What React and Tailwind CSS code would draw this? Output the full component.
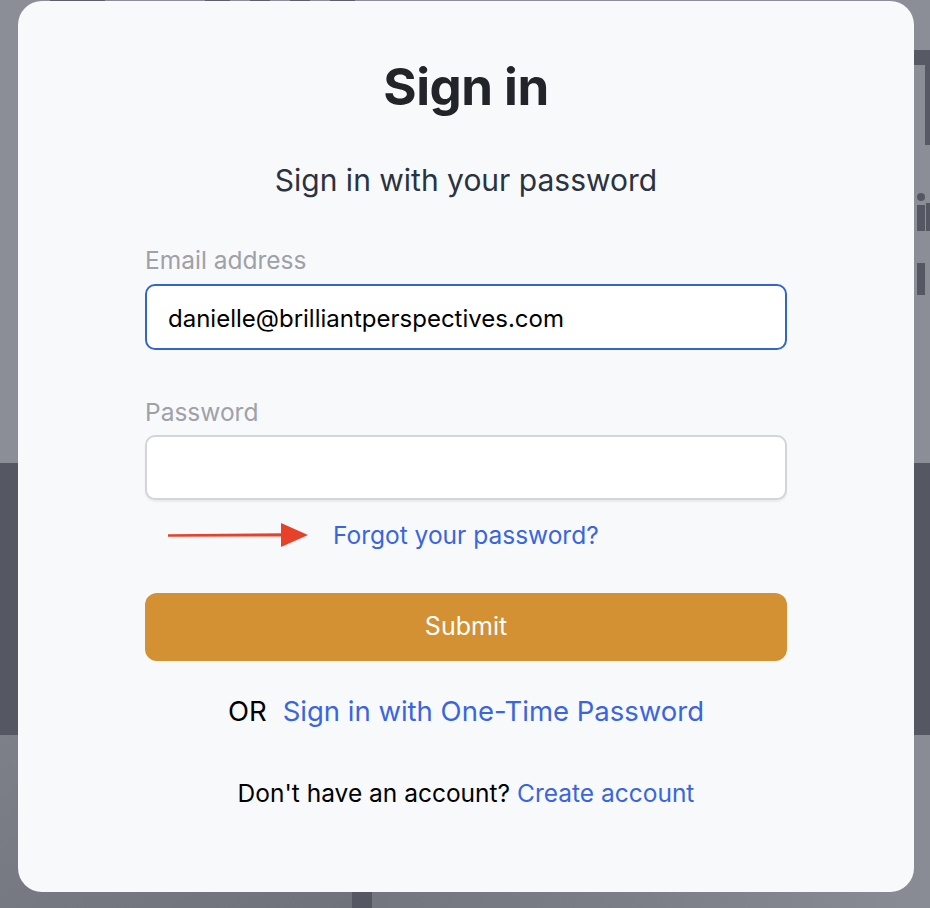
import { useState } from "react"

const Arrow = () => (
  <svg width="144" height="26" viewBox="0 0 144 26" className="shrink-0">
    <path d="M2 12.2 L118 11.2 L118 14.4 L2 14.8 Z" fill="#e8412a" />
    <path d="M115 1 L142 13 L115 25 Z" fill="#e8412a" />
  </svg>
)

export default function App() {
  const [email, setEmail] = useState("danielle@brilliantperspectives.com")
  const [password, setPassword] = useState("")

  return (
    <div className="relative w-[930px] h-[908px] overflow-hidden font-['Inter','Liberation_Sans',sans-serif]">
      {/* pagina de fondo bajo el overlay */}
      <div className="flex flex-col h-full">
        <div className="h-[463px] bg-[#8c8e97] relative">
          <div className="flex gap-5 pl-[50px] h-[2px]">
            <div className="w-[55px] bg-[#5d606b]" />
            <div className="w-[25px] ml-[80px] bg-[#5d606b]" />
            <div className="w-[20px] bg-[#5d606b]" />
            <div className="w-[20px] bg-[#5d606b]" />
            <div className="w-[25px] bg-[#5d606b]" />
          </div>
          {/* trozos de letras del fondo */}
          <div className="absolute left-[914px] top-[50px] w-[16px] h-[15px] bg-[#575a65]" />
          <div className="absolute left-[925px] top-[50px] w-[5px] h-[95px] bg-[#575a65]" />
          <div className="absolute left-[917px] top-[193px] w-[8px] h-[8px] rounded-full bg-[#555863]" />
          <div className="absolute left-[917px] top-[205px] w-[8px] h-[26px] bg-[#555863]" />
          <div className="absolute left-[926px] top-[203px] w-[4px] h-[28px] bg-[#555863]" />
          <div className="absolute left-[917px] top-[263px] w-[8px] h-[32px] bg-[#555863]" />
        </div>
        <div className="h-[272px] bg-[#555863]" />
        <div className="flex-1 flex">
          <div className="w-[352px] bg-gradient-to-br from-[#7d7f89] to-[#6f717b]" />
          <div className="w-[20px] bg-[#555863]" />
          <div className="flex-1 bg-gradient-to-r from-[#74767f] via-[#7c7e88] to-[#8a8c95]" />
        </div>
      </div>

      {/* modal */}
      <div className="absolute left-[18px] top-[1px] w-[896px] h-[891px] bg-[#f8f9fb] rounded-[24px] flex flex-col items-center">
        <h1 className="mt-[54px] text-[51px] leading-[64px] font-bold text-[#212529] tracking-[-0.5px]">Sign in</h1>
        <p className="mt-[43px] text-[30px] leading-[36px] text-[#2b3240]">Sign in with your password</p>

        <div className="w-[642px] mt-[47px] flex flex-col">
          <label className="text-[24.5px] leading-[30px] text-[#9ea1a8]">Email address</label>
          <input
            value={email}
            onChange={(e) => setEmail(e.target.value)}
            className="mt-[9px] h-[66px] rounded-[10px] border-2 border-[#3366cc] bg-white px-[21px] pt-[2px] text-[24px] text-black outline-none"
          />

          <label className="mt-[47px] text-[24.5px] leading-[30px] text-[#9ea1a8]">Password</label>
          <input
            type="password"
            value={password}
            onChange={(e) => setPassword(e.target.value)}
            className="mt-[8px] h-[65px] rounded-[10px] border-2 border-[#d4d5d9] bg-white px-[21px] text-[24px] outline-none shadow-[0_2px_2px_rgba(0,0,0,0.06)]"
          />

          <div className="mt-[20px] flex items-center">
            <div className="ml-[21px]"><Arrow /></div>
            <a href="#" className="ml-[23px] text-[24.5px] leading-[30px] text-[#3a65e0]">Forgot your password?</a>
          </div>

          <button className="mt-[43px] h-[68px] rounded-[12px] bg-[#d39133] text-white text-[25px]">Submit</button>
        </div>

        <div className="mt-[32px] flex items-center text-[27.5px] leading-[36px]">
          <span className="text-black">OR</span>
          <a href="#" className="ml-[16px] text-[#3a65e0]">Sign in with One-Time Password</a>
        </div>

        <div className="mt-[49px] text-[24.5px] leading-[30px] text-black">
          Don't have an account? <a href="#" className="text-[#3a65e0]">Create account</a>
        </div>
      </div>
    </div>
  )
}
